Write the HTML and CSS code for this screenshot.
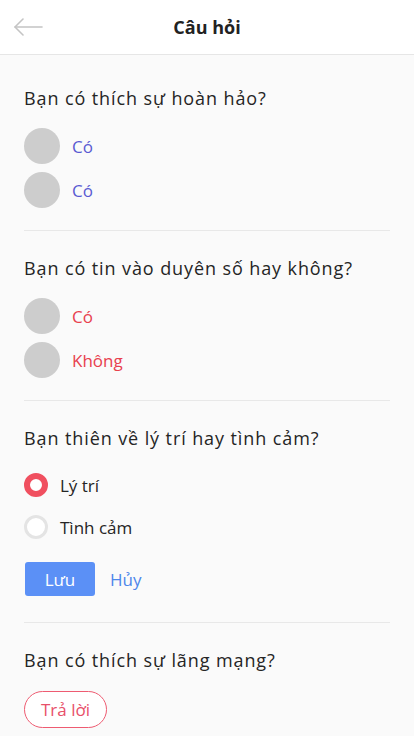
FILE: index.html
```html
<!DOCTYPE html>
<html lang="vi">
<head>
<meta charset="utf-8">
<title>Câu hỏi</title>
<link rel="stylesheet" href="styles.css">
</head>
<body>
<header class="topbar">
  <button class="back" aria-label="Quay lại">
    <svg width="30" height="18" viewBox="0 0 30 18" fill="none" stroke="#c4c4c4" stroke-width="1.6" stroke-linecap="round" stroke-linejoin="round">
      <path d="M29 9H2"/>
      <path d="M10 1L2 9l8 8"/>
    </svg>
  </button>
  <h1 class="title">Câu hỏi</h1>
  <span></span>
</header>
<main class="content">
  <section class="q">
    <p class="q-text">Bạn có thích sự hoàn hảo?</p>
    <ul class="answers">
      <li class="answer"><span class="dot"></span><span class="lbl lbl-blue">Có</span></li>
      <li class="answer"><span class="dot"></span><span class="lbl lbl-blue">Có</span></li>
    </ul>
  </section>
  <section class="q">
    <p class="q-text">Bạn có tin vào duyên số hay không?</p>
    <ul class="answers">
      <li class="answer"><span class="dot"></span><span class="lbl lbl-red">Có</span></li>
      <li class="answer"><span class="dot"></span><span class="lbl lbl-red">Không</span></li>
    </ul>
  </section>
  <section class="q q-form">
    <p class="q-text">Bạn thiên về lý trí hay tình cảm?</p>
    <ul class="radios">
      <li class="radio-row"><span class="radio radio-on"></span><span class="rlbl">Lý trí</span></li>
      <li class="radio-row"><span class="radio"></span><span class="rlbl">Tình cảm</span></li>
    </ul>
    <div class="actions">
      <button class="btn-save">Lưu</button>
      <button class="btn-cancel">Hủy</button>
    </div>
  </section>
  <section class="q q-last">
    <p class="q-text">Bạn có thích sự lãng mạng?</p>
    <button class="btn-answer">Trả lời</button>
  </section>
</main>
</body>
</html>
```
FILE: styles.css
```css
* { box-sizing: border-box; }
html, body { margin: 0; padding: 0; }
body {
  background: #fafafa;
  font-family: "Open Sans", "Liberation Sans", sans-serif;
  color: #222;
  width: 414px;
  height: 736px;
  overflow: hidden;
}
.topbar {
  height: 55px;
  background: #fff;
  border-bottom: 1px solid #e6e6e6;
  display: grid;
  grid-template-columns: 1fr auto 1fr;
  align-items: center;
}
.back {
  justify-self: start;
  margin-left: 13px;
  background: none;
  border: 0;
  padding: 0;
  display: flex;
}
.title {
  margin: 0;
  font-size: 18px;
  font-weight: 700;
  color: #222;
}
.content {
  padding: 6px 24px 0;
}
.q {
  padding: 25px 0 22px;
  border-bottom: 1px solid #e8e8e8;
}
.q-form { padding-bottom: 26px; }
.q-last { border-bottom: 0; }
.q-text {
  margin: 0;
  font-size: 18px;
  line-height: 24px;
  letter-spacing: 0.9px;
  color: #252525;
}
.answers, .radios {
  list-style: none;
  margin: 0;
  padding: 0;
}
.answers {
  margin-top: 18px;
  display: flex;
  flex-direction: column;
  gap: 8px;
}
.answer {
  display: flex;
  align-items: center;
  gap: 12px;
}
.dot {
  width: 36px;
  height: 36px;
  border-radius: 50%;
  background: #cdcdcd;
}
.lbl { font-size: 17px; }
.lbl-blue { color: #5a5ad2; }
.lbl-red { color: #e8404e; }
.radios {
  margin-top: 23px;
  display: flex;
  flex-direction: column;
  gap: 18px;
}
.radio-row {
  display: flex;
  align-items: center;
  gap: 12px;
  height: 24px;
}
.radio {
  width: 24px;
  height: 24px;
  border-radius: 50%;
  border: 3px solid #e4e4e4;
  background: #fff;
}
.radio-on {
  border: 6px solid #f04f5f;
}
.rlbl { font-size: 17px; color: #252525; }
.actions {
  margin-top: 23px;
  display: flex;
  align-items: center;
  gap: 15px;
}
.btn-save {
  width: 70px;
  height: 34px;
  margin-left: 1px;
  border: 0;
  border-radius: 3px;
  background: #5b90f6;
  color: #fff;
  font-family: inherit;
  font-size: 17px;
}
.btn-cancel {
  border: 0;
  background: none;
  padding: 0;
  color: #4d87ea;
  font-family: inherit;
  font-size: 17px;
}
.q-last .btn-answer {
  margin-top: 19px;
}
.btn-answer {
  height: 37px;
  padding: 0 16px;
  border: 1px solid #ee5b71;
  border-radius: 19px;
  background: #fff;
  color: #e8506a;
  font-family: inherit;
  font-size: 17px;
}
```
